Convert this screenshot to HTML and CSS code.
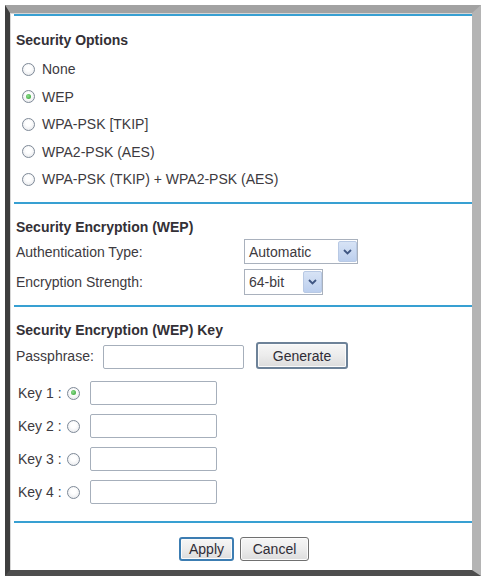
FILE: index.html
```html
<!DOCTYPE html>
<html lang="en">
<head>
<meta charset="utf-8">
<title>Wireless Security</title>
<link rel="stylesheet" href="styles.css">
</head>
<body>
<form class="panel">
  <section class="sec sec-options">
    <h2 class="title">Security Options</h2>
    <ul class="choices">
      <li class="choice"><span class="radio"></span>None</li>
      <li class="choice"><span class="radio on"></span>WEP</li>
      <li class="choice"><span class="radio"></span>WPA-PSK [TKIP]</li>
      <li class="choice"><span class="radio"></span>WPA2-PSK (AES)</li>
      <li class="choice"><span class="radio"></span>WPA-PSK (TKIP) + WPA2-PSK (AES)</li>
    </ul>
  </section>

  <section class="sec sec-enc">
    <h2 class="title">Security Encryption (WEP)</h2>
    <div class="field field-auth">
      <span class="lbl">Authentication Type:</span>
      <span class="select sel-auth">
        <span class="sel-text">Automatic</span>
        <span class="sel-btn"><svg width="9" height="6" viewBox="0 0 9 6"><polyline points="1,1 4.5,4.5 8,1" fill="none" stroke="#3f5683" stroke-width="1.8"/></svg></span>
      </span>
    </div>
    <div class="field field-strength">
      <span class="lbl">Encryption Strength:</span>
      <span class="select sel-bits">
        <span class="sel-text">64-bit</span>
        <span class="sel-btn"><svg width="9" height="6" viewBox="0 0 9 6"><polyline points="1,1 4.5,4.5 8,1" fill="none" stroke="#3f5683" stroke-width="1.8"/></svg></span>
      </span>
    </div>
  </section>

  <section class="sec sec-key">
    <h2 class="title">Security Encryption (WEP) Key</h2>
    <div class="pass-row">
      <span class="pass-lbl">Passphrase:</span>
      <span class="text-box pass-box"></span>
      <button type="button" class="btn btn-generate">Generate</button>
    </div>
    <div class="keys">
      <div class="key-row"><span class="key-lbl">Key 1 :</span><span class="radio on"></span><span class="text-box key-box"></span></div>
      <div class="key-row"><span class="key-lbl">Key 2 :</span><span class="radio"></span><span class="text-box key-box"></span></div>
      <div class="key-row"><span class="key-lbl">Key 3 :</span><span class="radio"></span><span class="text-box key-box"></span></div>
      <div class="key-row"><span class="key-lbl">Key 4 :</span><span class="radio"></span><span class="text-box key-box"></span></div>
    </div>
  </section>

  <section class="sec sec-actions">
    <button type="button" class="btn btn-apply">Apply</button>
    <button type="button" class="btn btn-cancel">Cancel</button>
  </section>
</form>
</body>
</html>
```

FILE: styles.css
```css
body {
  margin: 0;
  background: #fff;
  font-family: "Liberation Sans", Arial, sans-serif;
  font-size: 14px;
  color: #3d3a40;
}

/* window frame around the settings form */
.panel {
  margin: 5px 0 0 5px;
  width: 462px;
  border-style: solid;
  border-width: 8px 9px 6px 5px;
  border-color: #a2a2a2 #b4b4b4 #4e4e4e #3e3e3e;
  padding-top: 1px;
  background: #fff;
  box-shadow: inset 1px 1px 0 #d6d6d6;
}

/* each block starts with a blue rule */
.sec {
  margin-left: 4px;
  border-top: 2px solid #38a0d2;
  padding-left: 2px;
}

.title {
  margin: 0;
  height: 20px;
  line-height: 20px;
  font-size: 14px;
  font-weight: bold;
  color: #333036;
}

/* radio button drawn with CSS */
.radio {
  box-sizing: border-box;
  width: 13px;
  height: 13px;
  flex: none;
  border: 1.5px solid #7e8997;
  border-radius: 50%;
  background: radial-gradient(circle at 50% 40%, #ffffff 30%, #e1e3e7 100%);
  position: relative;
}
.radio.on::after {
  content: "";
  position: absolute;
  left: 2.5px;
  top: 2.5px;
  width: 5px;
  height: 5px;
  border-radius: 50%;
  background: radial-gradient(circle at 40% 40%, #8ee08e, #2c9a2c);
}

/* Security Options */
.sec-options {
  padding-top: 14px;
  padding-bottom: 13px;
}
.choices {
  list-style: none;
  margin: 9px 0 0;
  padding: 0 0 0 6px;
  display: flex;
  flex-direction: column;
  gap: 7.5px;
}
.choice {
  height: 20px;
  display: flex;
  align-items: center;
  gap: 7px;
}

/* Security Encryption (WEP) */
.sec-enc {
  padding-top: 13px;
  padding-bottom: 10px;
}
.field {
  display: flex;
  align-items: center;
}
.field-auth {
  margin-top: 2px;
  height: 25px;
}
.field-strength {
  margin-top: 5px;
  height: 26px;
}
.lbl {
  width: 228px;
}
.select {
  box-sizing: border-box;
  height: 100%;
  border: 1px solid #a9b1bd;
  display: flex;
  align-items: center;
  justify-content: space-between;
  padding: 1px 0 1px 4px;
  background: #fff;
}
.sel-auth { width: 114px; }
.sel-bits { width: 79px; }
.sel-btn {
  box-sizing: border-box;
  width: 19px;
  height: 100%;
  border: 1px solid #b8c9e4;
  border-radius: 2px;
  background: linear-gradient(#d7e3f5, #bccfee);
  display: flex;
  align-items: center;
  justify-content: center;
}

/* Security Encryption (WEP) Key */
.sec-key {
  padding-top: 13px;
  padding-bottom: 17px;
}
.pass-row {
  margin-top: 2px;
  height: 27px;
  display: flex;
  align-items: flex-end;
}
.pass-lbl {
  width: 87px;
  align-self: center;
}
.text-box {
  box-sizing: border-box;
  height: 24px;
  border: 1px solid #a6afbb;
  border-radius: 2px;
  background: #fff;
}
.pass-box {
  width: 141px;
}
.keys {
  margin-top: 12px;
  display: flex;
  flex-direction: column;
  gap: 9px;
}
.key-row {
  height: 24px;
  display: flex;
  align-items: center;
}
.key-lbl {
  box-sizing: border-box;
  width: 51px;
  padding-left: 2px;
}
.key-box {
  width: 127px;
  margin-left: 10px;
}

/* push buttons */
.btn {
  box-sizing: border-box;
  font-family: "Liberation Sans", Arial, sans-serif;
  font-size: 14px;
  color: #2f2c36;
  padding: 0;
  border-radius: 3px;
  background: linear-gradient(#f6f6f6 0%, #ececec 50%, #dcdcdc 100%);
  box-shadow: inset 0 0 0 1px #fbfbfb;
}
.btn-generate {
  margin-left: 12px;
  width: 92px;
  height: 27px;
  border: 2px solid #6d8298;
}
.sec-actions {
  padding-top: 14px;
  padding-bottom: 9px;
  display: flex;
  justify-content: center;
  gap: 6px;
}
.btn-apply {
  width: 55px;
  height: 24px;
  border: 2px solid #3c7db2;
}
.btn-cancel {
  width: 69px;
  height: 24px;
  border: 1px solid #707070;
}
```
